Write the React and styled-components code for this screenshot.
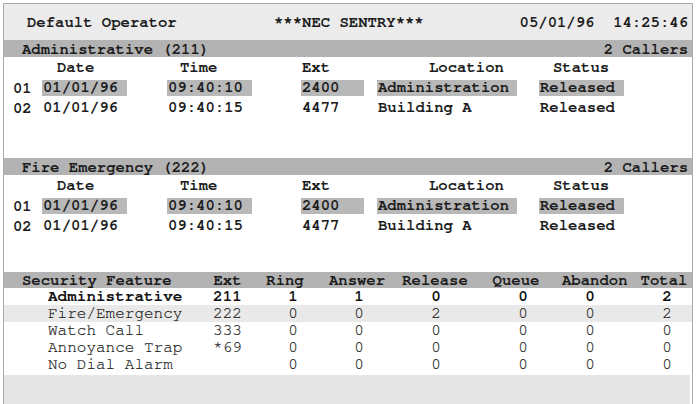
import React from 'react';
import styled, { createGlobalStyle } from 'styled-components';

const GlobalStyle = createGlobalStyle`
  html, body { margin: 0; padding: 0; background: #fff; height: 100%; overflow: hidden; }
  #root { height: 100%; }
`;

const mono = `"Nimbus Mono PS", "Nimbus Mono L", "FreeMono", "Courier 10 Pitch", "Courier New", Courier, "Liberation Mono", monospace`;

const Frame = styled.div`
  box-sizing: border-box;
  margin: 3px 0 0 3px;
  width: 690px;
  height: calc(100% - 3px);
  border: 1px solid #a9a9a9;
  border-bottom: none;
  display: flex;
  flex-direction: column;
  font-family: ${mono};
  font-size: 15.6px;
  font-weight: 700;
  color: #1c1c1c;
  white-space: pre;
`;

const TopBar = styled.header`
  flex: none;
  height: 36px;
  background: #ebebeb;
  display: grid;
  grid-template-columns: 247px 1fr auto;
  align-items: center;
  padding: 0 4px 0 23px;
`;

const Band = styled.div`
  box-sizing: border-box;
  flex: none;
  height: 17px;
  line-height: 17px;
  background: #b3b3b3;
  display: flex;
  justify-content: space-between;
  align-items: center;
  padding: 1px 4px 0 18px;
  margin-top: ${(p) => p.$gap || 0}px;
`;

const CallRow = styled.div`
  flex: none;
  height: ${(p) => p.$h}px;
  display: grid;
  grid-template-columns: 29px 125px 134px 76px 162px 1fr;
  align-items: center;
  padding-left: 9px;
`;

const ColHead = styled.span`
  padding-left: ${(p) => p.$indent}px;
`;

const Value = styled.span`
  box-sizing: border-box;
  display: block;
  width: ${(p) => p.$w}px;
  height: 16px;
  line-height: 16px;
  padding-left: 1px;
  background: ${(p) => (p.$hl ? '#b8b8b8' : 'transparent')};
`;

const StatsHead = styled.div`
  flex: none;
  margin-top: 36px;
  height: 16px;
  line-height: 18px;
  background: #b3b3b3;
  display: grid;
  grid-template-columns: 195px 57px 58px 86px 70px 92px 56px 92px;
`;

const StatsRow = styled.div`
  flex: none;
  height: 17px;
  line-height: 17px;
  display: grid;
  grid-template-columns: 195px 57px 74px 58px 96px 78px 56px 98px;
  font-size: 16px;
  font-weight: ${(p) => (p.$bold ? 700 : 400)};
  color: ${(p) => (p.$bold ? '#111' : '#111')};
  -webkit-text-stroke: ${(p) => (p.$bold ? '0' : '0.2px')} #333;
  background: ${(p) => (p.$shade ? '#e9e9e9' : 'transparent')};
`;

const Centered = styled.span`
  text-align: center;
`;

const Feature = styled.span`
  padding-left: ${(p) => p.$indent}px;
`;

const Footer = styled.div`
  flex: 1;
  margin: 2px 2px 0 0;
  background: #e6e6e6;
`;

const columns = [
  { label: 'Date', indent: 15, w: 85 },
  { label: 'Time', indent: 13, w: 85 },
  { label: 'Ext', indent: 1, w: 63 },
  { label: 'Location', indent: 52, w: 140 },
  { label: 'Status', indent: 14, w: 85 },
];

const calls = [
  { n: '01', v: ['01/01/96', '09:40:10', '2400', 'Administration', 'Released'], hl: true },
  { n: '02', v: ['01/01/96', '09:40:15', '4477', 'Building A', 'Released'], hl: false },
];

function CallSection({ title, gap }) {
  return (
    <>
      <Band $gap={gap}>
        <span>{title}</span>
        <span>2 Callers</span>
      </Band>
      <CallRow $h={21}>
        <span />
        {columns.map((c) => (
          <ColHead key={c.label} $indent={c.indent}>{c.label}</ColHead>
        ))}
      </CallRow>
      {calls.map((r) => (
        <CallRow key={r.n} $h={20}>
          <span>{r.n}</span>
          {r.v.map((v, i) => (
            <Value key={i} $w={columns[i].w} $hl={r.hl}>{v}</Value>
          ))}
        </CallRow>
      ))}
    </>
  );
}

const statHeads = ['Ext', 'Ring', 'Answer', 'Release', 'Queue', 'Abandon', 'Total'];
const stats = [
  { name: 'Administrative', ext: '211', v: [1, 1, 0, 0, 0, 2], bold: true },
  { name: 'Fire/Emergency', ext: '222', v: [0, 0, 2, 0, 0, 2], shade: true },
  { name: 'Watch Call', ext: '333', v: [0, 0, 0, 0, 0, 0] },
  { name: 'Annoyance Trap', ext: '*69', v: [0, 0, 0, 0, 0, 0] },
  { name: 'No Dial Alarm', ext: '', v: [0, 0, 0, 0, 0, 0] },
];

export default function App() {
  return (
    <>
      <GlobalStyle />
      <Frame>
        <TopBar>
          <span>Default Operator</span>
          <span>***NEC SENTRY***</span>
          <span>05/01/96  14:25:46</span>
        </TopBar>
        <CallSection title="Administrative (211)" />
        <CallSection title="Fire Emergency (222)" gap={40} />
        <StatsHead>
          <Feature $indent={18}>Security Feature</Feature>
          {statHeads.map((h) => (
            <Centered key={h}>{h}</Centered>
          ))}
        </StatsHead>
        {stats.map((s) => (
          <StatsRow key={s.name} $bold={s.bold} $shade={s.shade}>
            <Feature $indent={44}>{s.name}</Feature>
            <Centered>{s.ext}</Centered>
            {s.v.map((v, i) => (
              <Centered key={i}>{v}</Centered>
            ))}
          </StatsRow>
        ))}
        <Footer />
      </Frame>
    </>
  );
}
